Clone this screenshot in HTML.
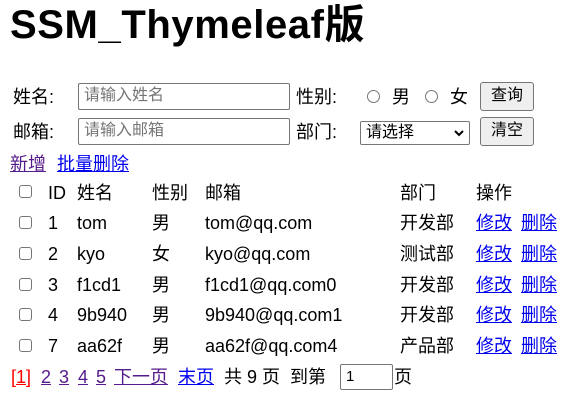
<!DOCTYPE html>
<html><head><meta charset="utf-8"><style>
*{margin:0;padding:0;box-sizing:border-box}
body{width:583px;height:402px;background:#fff;font-family:"Liberation Sans","Noto Sans CJK SC",sans-serif;font-size:18px;color:#000;position:relative;overflow:hidden}
.a{position:absolute;white-space:nowrap;line-height:22px}
h1{position:absolute;left:10px;top:2px;font-size:40px;font-weight:bold;line-height:46px;white-space:nowrap;letter-spacing:0.6px}
.inp{position:absolute;border:1px solid #767676;border-radius:2px;background:#fff;font-size:16px;color:#757575;padding-left:5px;line-height:24px}
.btn{position:absolute;border:1px solid #767676;border-radius:3px;background:#efefef;font-size:16px;text-align:center;line-height:26px}
.rad{position:absolute;width:13px;height:13px;border:1px solid #767676;border-radius:50%}
.cb{position:absolute;width:13px;height:13px;border:1px solid #767676;border-radius:3px;background:#fff}
.v{color:#551a8b;text-decoration:underline}
.b{color:#0000ee;text-decoration:underline}
</style></head><body>
<h1>SSM_Thymeleaf版</h1>
<span class="a" style="left:13px;top:86px">姓名:</span>
<div class="inp" style="left:78px;top:83px;width:212px;height:27px">请输入姓名</div>
<span class="a" style="left:296px;top:86px">性别:</span>
<div class="rad" style="left:367px;top:90px"></div><span class="a" style="left:392px;top:86px">男</span>
<div class="rad" style="left:425px;top:90px"></div><span class="a" style="left:450px;top:86px">女</span>
<div class="btn" style="left:480px;top:82px;width:54px;height:29px">查询</div>
<span class="a" style="left:13px;top:121px">邮箱:</span>
<div class="inp" style="left:78px;top:118px;width:212px;height:27px">请输入邮箱</div>
<span class="a" style="left:296px;top:121px">部门:</span>
<div class="inp" style="left:360px;top:121px;width:110px;height:24px;color:#000;font-size:16px;line-height:22px;padding-left:5px">请选择</div>
<svg style="position:absolute;left:454px;top:129px" width="10" height="8"><path d="M1 2 L5 6 L9 2" stroke="#000" stroke-width="2" fill="none"/></svg>
<div class="btn" style="left:480px;top:117px;width:54px;height:29px">清空</div>
<span class="a v" style="left:10px;top:153px">新增</span>
<span class="a b" style="left:57px;top:153px">批量删除</span>

<div class="cb" style="left:19px;top:185px"></div>
<span class="a" style="left:48px;top:182px">ID</span><span class="a" style="left:77px;top:182px">姓名</span><span class="a" style="left:152px;top:182px">性别</span><span class="a" style="left:205px;top:182px">邮箱</span><span class="a" style="left:400px;top:182px">部门</span><span class="a" style="left:476px;top:182px">操作</span>

<div class="cb" style="left:19px;top:216px"></div><span class="a" style="left:48px;top:212px">1</span><span class="a" style="left:77px;top:212px">tom</span><span class="a" style="left:152px;top:212px">男</span><span class="a" style="left:205px;top:212px">tom@qq.com</span><span class="a" style="left:400px;top:212px">开发部</span><span class="a b" style="left:476px;top:212px">修改</span><span class="a b" style="left:521px;top:212px">删除</span>
<div class="cb" style="left:19px;top:247px"></div><span class="a" style="left:48px;top:243px">2</span><span class="a" style="left:77px;top:243px">kyo</span><span class="a" style="left:152px;top:243px">女</span><span class="a" style="left:205px;top:243px">kyo@qq.com</span><span class="a" style="left:400px;top:243px">测试部</span><span class="a b" style="left:476px;top:243px">修改</span><span class="a b" style="left:521px;top:243px">删除</span>
<div class="cb" style="left:19px;top:278px"></div><span class="a" style="left:48px;top:274px">3</span><span class="a" style="left:77px;top:274px">f1cd1</span><span class="a" style="left:152px;top:274px">男</span><span class="a" style="left:205px;top:274px">f1cd1@qq.com0</span><span class="a" style="left:400px;top:274px">开发部</span><span class="a b" style="left:476px;top:274px">修改</span><span class="a b" style="left:521px;top:274px">删除</span>
<div class="cb" style="left:19px;top:308px"></div><span class="a" style="left:48px;top:304px">4</span><span class="a" style="left:77px;top:304px">9b940</span><span class="a" style="left:152px;top:304px">男</span><span class="a" style="left:205px;top:304px">9b940@qq.com1</span><span class="a" style="left:400px;top:304px">开发部</span><span class="a b" style="left:476px;top:304px">修改</span><span class="a b" style="left:521px;top:304px">删除</span>
<div class="cb" style="left:19px;top:339px"></div><span class="a" style="left:48px;top:335px">7</span><span class="a" style="left:77px;top:335px">aa62f</span><span class="a" style="left:152px;top:335px">男</span><span class="a" style="left:205px;top:335px">aa62f@qq.com4</span><span class="a" style="left:400px;top:335px">产品部</span><span class="a b" style="left:476px;top:335px">修改</span><span class="a b" style="left:521px;top:335px">删除</span>

<span class="a" style="left:11px;top:366px;color:#f00">[<span style="text-decoration:underline">1</span>]</span>
<span class="a v" style="left:41px;top:366px">2</span><span class="a v" style="left:59px;top:366px">3</span><span class="a v" style="left:78px;top:366px">4</span><span class="a v" style="left:96px;top:366px">5</span>
<span class="a v" style="left:114px;top:366px">下一页</span><span class="a b" style="left:178px;top:366px">末页</span>
<span class="a" style="left:224px;top:366px">共 9 页&nbsp; 到第</span>
<div class="inp" style="left:340px;top:364px;width:53px;height:26px;color:#000;font-size:15px;line-height:24px">1</div>
<span class="a" style="left:394px;top:366px">页</span>
</body></html>
